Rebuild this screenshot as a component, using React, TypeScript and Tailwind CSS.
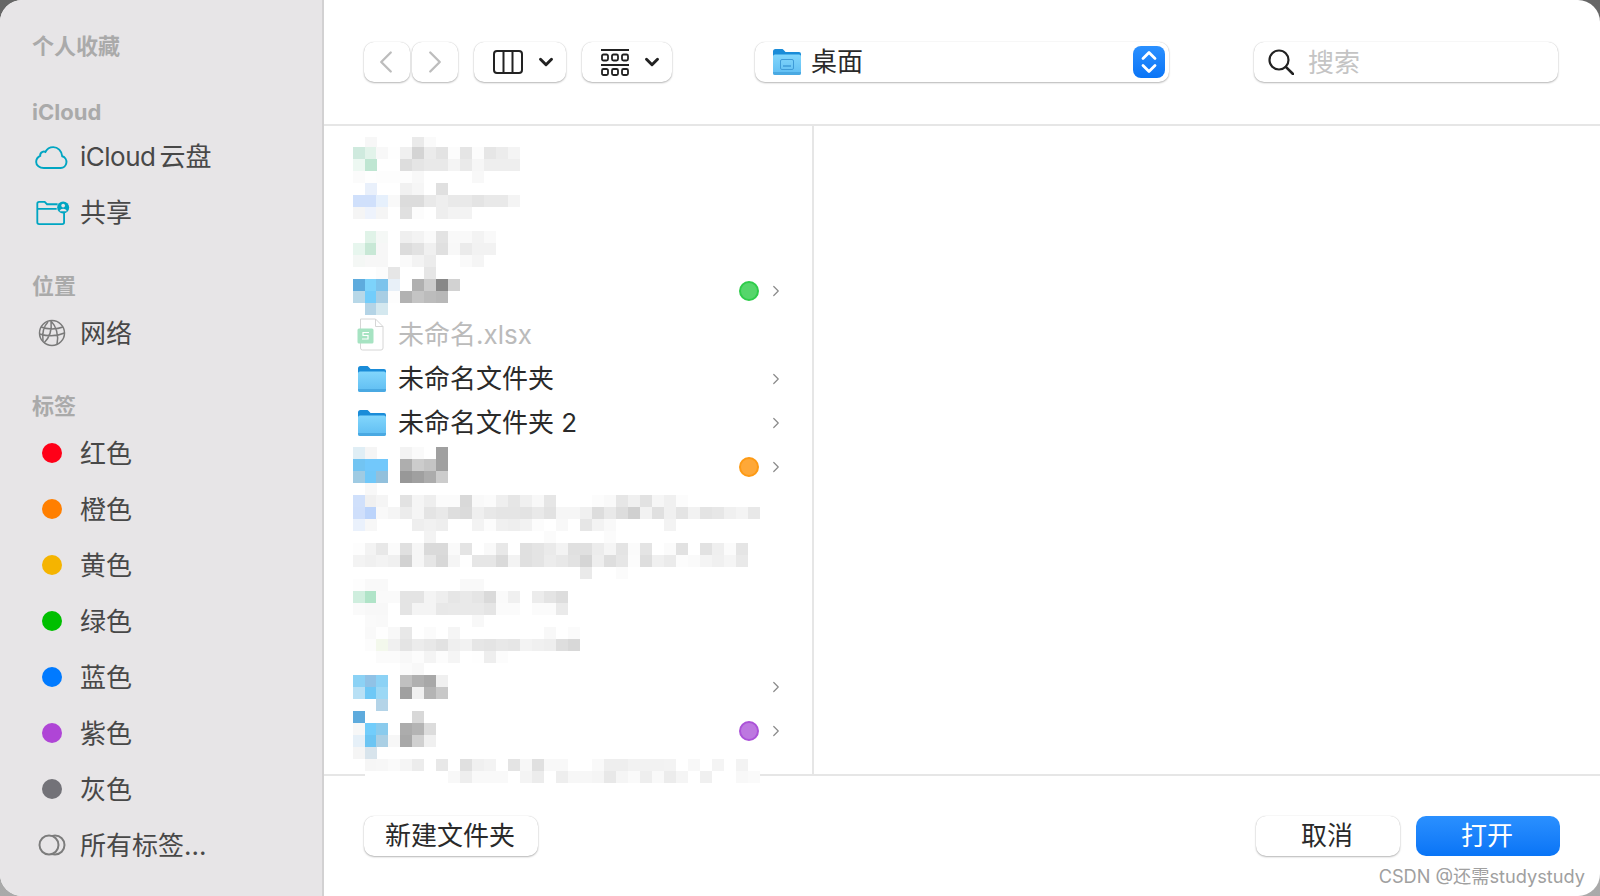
import React from 'react';
import { ChevronLeft, ChevronRight, ChevronDown } from 'lucide-react';

// pixelated (redacted) area of the file list: 12px cells, one line per row,
// one token per column from x=353. Two chars = grey level, six chars = colour, "." = nothing
const mosaic: Record<number, string> = {
  137: '. f7 . . . ea fa',
  147: 'cfeade e2f3ea f8 fe f0 d4 eb e3 fc e5 fc e6 ec f4',
  159: 'edf8f2 bfe6d2 . . dd e5 e9 e9 f4 ea f6 ee ee ee',
  171: 'fb fe fd fd fd f8 . . . . f8',
  183: '. e9f0fb . . f1 f6 . e0',
  195: 'd0e0fb d0e0fb e6f0fc f9 dc dc e9 ee e9 e9 e4 e9 e9 f4',
  207: 'f5 eef3fc f5 . e0 fc . ee f3 f3',
  231: '. e0f3e8 f5f8f6 . ef f3 fa e3 f9 f9 f3 f9',
  243: 'e7f6ee c8e8d6 f7 . dc e2 f0 e0 f8 eb f2 f2',
  255: 'f4f7f5 f7 f7 . fa f3 ec . . fa f5',
  267: '. . fc e6 . . e6',
  279: '5eabdd 7dd3fb 7cc3ec e8f0f8 . b0 cc 88 d2',
  291: 'b8d8e8 72cdfb a8cee4 fd b2 c4 bc b8',
  303: '. b4d4e6 d4e8ef',
  447: 'e0eef5 f5 . . f3 fa . a0',
  459: '72c4f2 72c8fb 72c8fb . ae cc c4 a0',
  471: '9fcbe3 70c8f9 92c0dc . 98 a0 ac cc',
  483: '. f8',
  495: 'd0e0fb f0 f5 . e2 f5 ee fb fb d9 f9 fb ef e6 f0 f8 e6 . . . fc f9 e6 f0 e2 f6 f0 fc',
  507: 'cfdffb bcd4fb f9 f5 ec f5 e4 e9 de db ef e8 e5 e5 e3 e9 e2 f6 f6 f0 dd e9 dd d0 f2 e0 f0 e4 f2 e4 e7 f0 f4 e8',
  519: 'eaf1fc f7 . . . ee f1 ee . . f3 fc f0 ee f2 fc . f8 . e6 f3 f9 . . . . f3',
  531: '. . . . . . f3 . . . . . . . . . fb . . . . fb',
  543: 'fd f3 e8 fb e0 f6 da da fa e4 . f9 e8 . e0 e4 ea f3 e0 e0 ec f5 e4 fb e4 . fb e2 . e2 ef fb e5',
  555: 'f3 f0 f3 f0 d2 f6 e6 d8 f5 fe e6 e6 da f3 e0 e4 ec e8 e2 d5 ee de e6 fc de f0 eb fc fa f4 f0 f5 e9',
  567: '. . . . . . . . . . . . . . . . . . . ea . . fb',
  579: 'fd f9 f9 . . . . . . f9 f9',
  591: 'cfeede b0e4c8 fa fa e4 e4 f4 ee e6 e9 e5 da fa f0 . ec e4 dd',
  603: 'fa f8 f8 . e4 f4 f4 e8 e9 e9 e9 e5 fb fb . fb fb ea',
  615: '. fa f9 . . . . . . . f8',
  627: '. f9 fe f8 e8 . fb . f5 . . . . . . . f8 . fb',
  639: '. fc f3f8ec f0 e4 ec e8 e2 ef f2 e6 e4 e8 e6 f3 f0 ee de d8',
  651: '. . fb fb f8 fc f4 fc f5 . fe ee fc',
  663: '. . . . fb f8',
  675: '8cd2f5 90c2e6 8cd2f5 . c0 b0 a8 f0',
  687: 'b8e0f5 6ec8f6 9cd8f5 . a0 f0 b4 c8',
  699: '. . b4d4e8',
  711: '5eabdd . . . . d8',
  723: 'f7 72cdfb 8acbed . ac b4 dc',
  735: 'e6f0f8 6cc5f3 aacfe4 f7 a8 d0 f0',
  747: 'f5 d8e4ec',
  759: '. f6 f7 fa f5 ec . e8 . e0 f0 f3 . e4 f7 e0 f8 f8 . . f9 ee ee f2 f2 f2 f3 . f8 . f4 . f3',
  771: '. ff ff ff ff ff ff ff f8 ee f9 f9 f9 ff f4 ec ff ee f7 f7 f5 e8 f5 fa ee f9 ec f5 ff f0 ff ff f8 fa',
};

function Mosaic() {
  return (
    <svg width="420" height="660" viewBox="353 135 420 660" className="absolute left-[29px] top-[9px] z-10" shapeRendering="crispEdges">
      {Object.entries(mosaic).flatMap(([y, line]) =>
        line.split(' ').map((c, i) =>
          c === '.' ? null : (
            <rect
              key={`${y}-${i}`}
              x={353 + i * 12 - (i >= 2 ? 1 : 0)}
              y={Number(y)}
              width="12"
              height={y === '137' ? 10 : 12}
              fill={`#${c.length === 2 ? c + c + c : c}`}
            />
          )
        )
      )}
    </svg>
  );
}

function FolderIcon({ desktop = false }: { desktop?: boolean }) {
  return (
    <svg width="30" height="28" viewBox="0 0 30 28">
      <defs>
        <linearGradient id="folderBody" x1="0" y1="0" x2="0" y2="1">
          <stop offset="0" stopColor="#82d6fc" />
          <stop offset="1" stopColor="#5fbdf2" />
        </linearGradient>
      </defs>
      <path d="M1 6V3.500A2.500 2.500 0 0 1 3.500 1h6.200c1 0 1.500.4 2.200 1.200L13.500 4H27a2 2 0 0 1 2 2v3H1z" fill="#1a8cd8" />
      <path d="M1 8.500A2 2 0 0 1 3 6.500h24a2 2 0 0 1 2 2V25a2 2 0 0 1-2 2H3a2 2 0 0 1-2-2z" fill="url(#folderBody)" />
      <path d="M1 24h28v1a2 2 0 0 1-2 2H3a2 2 0 0 1-2-2z" fill="#4aa9e2" />
      {desktop && (
        <g fill="none" stroke="#3f9bd8" strokeWidth="1">
          <rect x="8.500" y="11.500" width="13" height="10" rx="1.500" />
          <path d="M11 18h8" strokeWidth="1.500" />
        </g>
      )}
    </svg>
  );
}

function SheetIcon() {
  return (
    <svg width="30" height="34" viewBox="0 0 30 34">
      <path d="M3.500 1h15L26 8.500V30a2 2 0 0 1-2 2H5.500a2 2 0 0 1-2-2z" fill="#fff" stroke="#d6d6d6" />
      <path d="M18.500 1v7.500H26" fill="none" stroke="#d6d6d6" />
      <rect x="0.500" y="10.500" width="16" height="15" rx="1.500" fill="#a6e3c2" />
      <path d="M12 14.500H6v3h5v3.500H5" fill="none" stroke="#fff" strokeWidth="1.200" />
    </svg>
  );
}

function ViewColumnsIcon() {
  return (
    <svg width="30" height="24" viewBox="0 0 30 24" fill="none" stroke="#222" strokeWidth="2">
      <rect x="1" y="1" width="28" height="22" rx="3" />
      <path d="M10.500 1v22M19.500 1v22" />
    </svg>
  );
}

function GalleryIcon() {
  return (
    <svg width="28" height="27" viewBox="0 0 28 27" fill="none" stroke="#222" strokeWidth="1.800">
      <path d="M0 1h28M0 16h28" />
      {[1, 11, 21].map((x) => (
        <React.Fragment key={x}>
          <rect x={x} y="5.500" width="6" height="6" rx="1.500" />
          <rect x={x} y="20" width="6" height="6" rx="1.500" />
        </React.Fragment>
      ))}
    </svg>
  );
}

function SearchIcon() {
  return (
    <svg width="26" height="26" viewBox="0 0 26 26" fill="none" stroke="#222" strokeWidth="2.200">
      <circle cx="11" cy="11" r="9.500" />
      <path d="M17.800 17.800L25 25" strokeLinecap="round" strokeWidth="2.600" />
    </svg>
  );
}

function CloudIcon() {
  return (
    <svg width="33" height="23" viewBox="0 0 34 24" fill="none" stroke="#00a5c2" strokeWidth="2">
      <path d="M9 23h17.500a6.300 6.300 0 0 0 1.700-12.300C27.600 5 23.600 1.200 18.800 1.200c-3.600 0-6.600 2-8.200 5-1-.5-2-.5-3-.1-1.700.7-2.600 2.300-2.400 4.200C2.800 11.500 1 13.900 1 16.600 1 20.200 4.500 23 9 23z" />
    </svg>
  );
}

function SharedIcon() {
  return (
    <svg width="34" height="24" viewBox="0 0 36 26" fill="none" stroke="#00a5c2" strokeWidth="2" className="ml-[2px]">
      <path d="M23 3.500H11.500L9 1H3a2 2 0 0 0-2 2v20a2 2 0 0 0 2 2h25a2 2 0 0 0 2-2V13M1 8.500h21" />
      <circle cx="29" cy="7" r="6.500" fill="#00a5c2" stroke="none" />
      <circle cx="29" cy="5" r="2" fill="#e7e5e7" stroke="none" />
      <path d="M25 11c.7-1.800 2.200-2.700 4-2.700s3.300.9 4 2.700z" fill="#e7e5e7" stroke="none" />
    </svg>
  );
}

function GlobeIcon() {
  return (
    <svg width="28" height="28" viewBox="0 0 28 28" fill="none" stroke="#7a7a7a" strokeWidth="1.500">
      <circle cx="14" cy="14" r="12.500" />
      <path d="M3 8c6 2.500 16 2.500 22 0M1.500 15c8 2.500 17 2.500 25-1M6 24c6-6 8-14 7-22M13 2c5 5 8 14 6 23.500M10 3C5 8 4 14 5 22" />
    </svg>
  );
}

function AllTagsIcon() {
  return (
    <svg width="28" height="22" viewBox="0 0 28 22" fill="none" stroke="#7c7c7c" strokeWidth="2">
      <circle cx="17" cy="11" r="9.500" />
      <circle cx="11" cy="11" r="9.500" fill="#e7e5e7" />
    </svg>
  );
}

function SidebarHeader({ label, className }: { label: string; className: string }) {
  return <div className={`flex h-[34px] items-center pl-[32px] text-[22px] font-bold text-[#aaaaaa] ${className}`}>{label}</div>;
}

function SidebarItem({ icon, label, textClass = '' }: { icon: React.ReactNode; label: React.ReactNode; textClass?: string }) {
  return (
    <div className="flex h-[56px] items-center text-[26px] text-[#484848]">
      <div className="flex w-[80px] shrink-0 pl-[23px]">
        <div className="flex w-[58px] justify-center">{icon}</div>
      </div>
      <span className={textClass}>{label}</span>
    </div>
  );
}

const tags = [
  { label: '红色', color: 'bg-[#ff0018]' },
  { label: '橙色', color: 'bg-[#ff7f00]' },
  { label: '黄色', color: 'bg-[#f5b400]' },
  { label: '绿色', color: 'bg-[#00bf00]' },
  { label: '蓝色', color: 'bg-[#007aff]' },
  { label: '紫色', color: 'bg-[#af45d6]' },
  { label: '灰色', color: 'bg-[#737278]' },
];

type Row = { name?: string; icon?: 'folder' | 'sheet'; dim?: boolean; dot?: string; arrow?: boolean };

// the rows without a name are the ones under the mosaic
const rows: Row[] = [
  {},
  {},
  {},
  { dot: 'border-[#2ecc4a] bg-[#55d66b]', arrow: true },
  { name: '未命名.xlsx', icon: 'sheet', dim: true },
  { name: '未命名文件夹', icon: 'folder', arrow: true },
  { name: '未命名文件夹 2', icon: 'folder', arrow: true },
  { dot: 'border-[#fd9a14] bg-[#fea838]', arrow: true },
  {},
  {},
  {},
  {},
  { arrow: true },
  { dot: 'border-[#ab52d8] bg-[#bd78e0]', arrow: true },
];

function ToolbarButton({ className, children }: { className: string; children: React.ReactNode }) {
  return (
    <div className={`flex h-[40px] items-center rounded-[10px] bg-white shadow-[0_1px_2px_rgba(0,0,0,0.28),0_0_1px_rgba(0,0,0,0.2)] ${className}`}>
      {children}
    </div>
  );
}

export default function App() {
  return (
    <div className="h-[896px] w-[1600px] overflow-hidden bg-gradient-to-b from-[#666666] to-[#aaaaaa] font-['Inter','Noto_Sans_CJK_SC',sans-serif]">
      <div className="relative flex h-full w-full overflow-hidden rounded-[22px] bg-white">
        {/* Sidebar */}
        <aside className="h-full w-[324px] shrink-0 border-r-2 border-[#d2d1d2] bg-[#e7e5e7] pt-[29px]">
          <SidebarHeader label="个人收藏" className="" />
          <SidebarHeader label="iCloud" className="mt-[32px]" />
          <SidebarItem
            icon={<CloudIcon />}
            textClass="pb-[2px]"
            label={
              <>
                <span className="tracking-[-0.5px]">iCloud</span>
                <span className="ml-[4px]">云盘</span>
              </>
            }
          />
          <SidebarItem icon={<SharedIcon />} label="共享" textClass="pb-[2px]" />
          <SidebarHeader label="位置" className="mb-[2px] mt-[28px]" />
          <SidebarItem icon={<GlobeIcon />} label="网络" />
          <SidebarHeader label="标签" className="mb-[2px] mt-[28px]" />
          {tags.map((t) => (
            <SidebarItem key={t.label} icon={<span className={`block h-[20px] w-[20px] rounded-full ${t.color}`} />} label={t.label} />
          ))}
          <SidebarItem icon={<AllTagsIcon />} label="所有标签..." />
        </aside>

        <main className="flex h-full min-w-0 flex-1 flex-col">
          {/* Toolbar */}
          <div className="flex h-[126px] shrink-0 items-start border-b-2 border-[#e6e6e6] pt-[42px] pl-[40px]">
            <ToolbarButton className="w-[46px] justify-center">
              <ChevronLeft size={38} strokeWidth={1.5} className="-ml-[2px] text-[#bdbdbd]" />
            </ToolbarButton>
            <ToolbarButton className="ml-[2px] w-[46px] justify-center">
              <ChevronRight size={38} strokeWidth={1.5} className="text-[#bdbdbd]" />
            </ToolbarButton>
            <ToolbarButton className="ml-[16px] w-[92px] pl-[19px]">
              <ViewColumnsIcon />
              <ChevronDown size={22} strokeWidth={3.2} className="ml-[12px] text-[#222222]" />
            </ToolbarButton>
            <ToolbarButton className="ml-[16px] w-[90px] pl-[19px]">
              <GalleryIcon />
              <ChevronDown size={22} strokeWidth={3.2} className="ml-[12px] text-[#222222]" />
            </ToolbarButton>
            <ToolbarButton className="ml-[83px] w-[414px] pl-[17px] pr-[4px]">
              <FolderIcon desktop />
              <span className="ml-[9px] flex-1 pb-[2px] text-[26px] text-[#2a2a2a]">桌面</span>
              <div className="flex h-[32px] w-[32px] flex-col items-center justify-center rounded-[8px] bg-gradient-to-b from-[#2a90ff] to-[#0874f6]">
                <svg width="18" height="26" viewBox="0 0 18 26" fill="none" stroke="#fff" strokeWidth="2.800" strokeLinecap="round" strokeLinejoin="round">
                  <path d="M3 9.500L9 3.500l6 6M3 16.500l6 6 6-6" />
                </svg>
              </div>
            </ToolbarButton>
            <ToolbarButton className="ml-[85px] w-[304px] pl-[14px]">
              <SearchIcon />
              <span className="ml-[14px] text-[26px] text-[#c4c4c4]">搜索</span>
            </ToolbarButton>
          </div>

          {/* File list and the empty preview column */}
          <div className="flex min-h-0 flex-1">
            <div className="relative h-full w-[490px] shrink-0 border-r-2 border-[#e6e6e6] pt-[11px]">
              {rows.map((r, i) => (
                <div key={i} className="flex h-[44px] items-center pl-[33px]">
                  <div className="flex w-[41px] shrink-0 items-center">
                    {r.icon === 'folder' && <FolderIcon />}
                    {r.icon === 'sheet' && <SheetIcon />}
                  </div>
                  <span className={`flex-1 pb-[2px] text-[26px] ${r.dim ? 'text-[#bbbbbb]' : 'text-[#2a2a2a]'}`}>{r.name}</span>
                  {r.dot && <span className={`h-[20px] w-[20px] rounded-full border-2 ${r.dot}`} />}
                  <div className="ml-[8px] mr-[27px] flex w-[18px] justify-center">
                    {r.arrow && <ChevronRight size={24} strokeWidth={1.6} className="text-[#8a8a8a]" />}
                  </div>
                </div>
              ))}
              <Mosaic />
            </div>
            <div className="flex-1" />
          </div>

          {/* Footer */}
          <div className="flex h-[122px] shrink-0 items-start border-t-2 border-[#e6e6e6] pt-[40px] pl-[40px] pr-[40px]">
            <button className="h-[40px] w-[174px] rounded-[10px] bg-white pb-[2px] pr-[2px] text-[26px] text-[#2a2a2a] shadow-[0_1px_2px_rgba(0,0,0,0.28),0_0_1px_rgba(0,0,0,0.2)]">
              新建文件夹
            </button>
            <button className="ml-auto h-[40px] w-[144px] rounded-[10px] bg-white pb-[2px] pr-[2px] text-[26px] text-[#2a2a2a] shadow-[0_1px_2px_rgba(0,0,0,0.28),0_0_1px_rgba(0,0,0,0.2)]">
              取消
            </button>
            <button className="ml-[16px] h-[40px] w-[144px] rounded-[10px] bg-gradient-to-b from-[#2a90ff] to-[#0874f6] pb-[2px] pr-[2px] text-[26px] text-white">
              打开
            </button>
          </div>
        </main>

        <span className="absolute right-[15px] top-[863px] text-[18.200px] leading-[26px] text-[#a0a0a0]">CSDN @还需studystudy</span>
      </div>
    </div>
  );
}
